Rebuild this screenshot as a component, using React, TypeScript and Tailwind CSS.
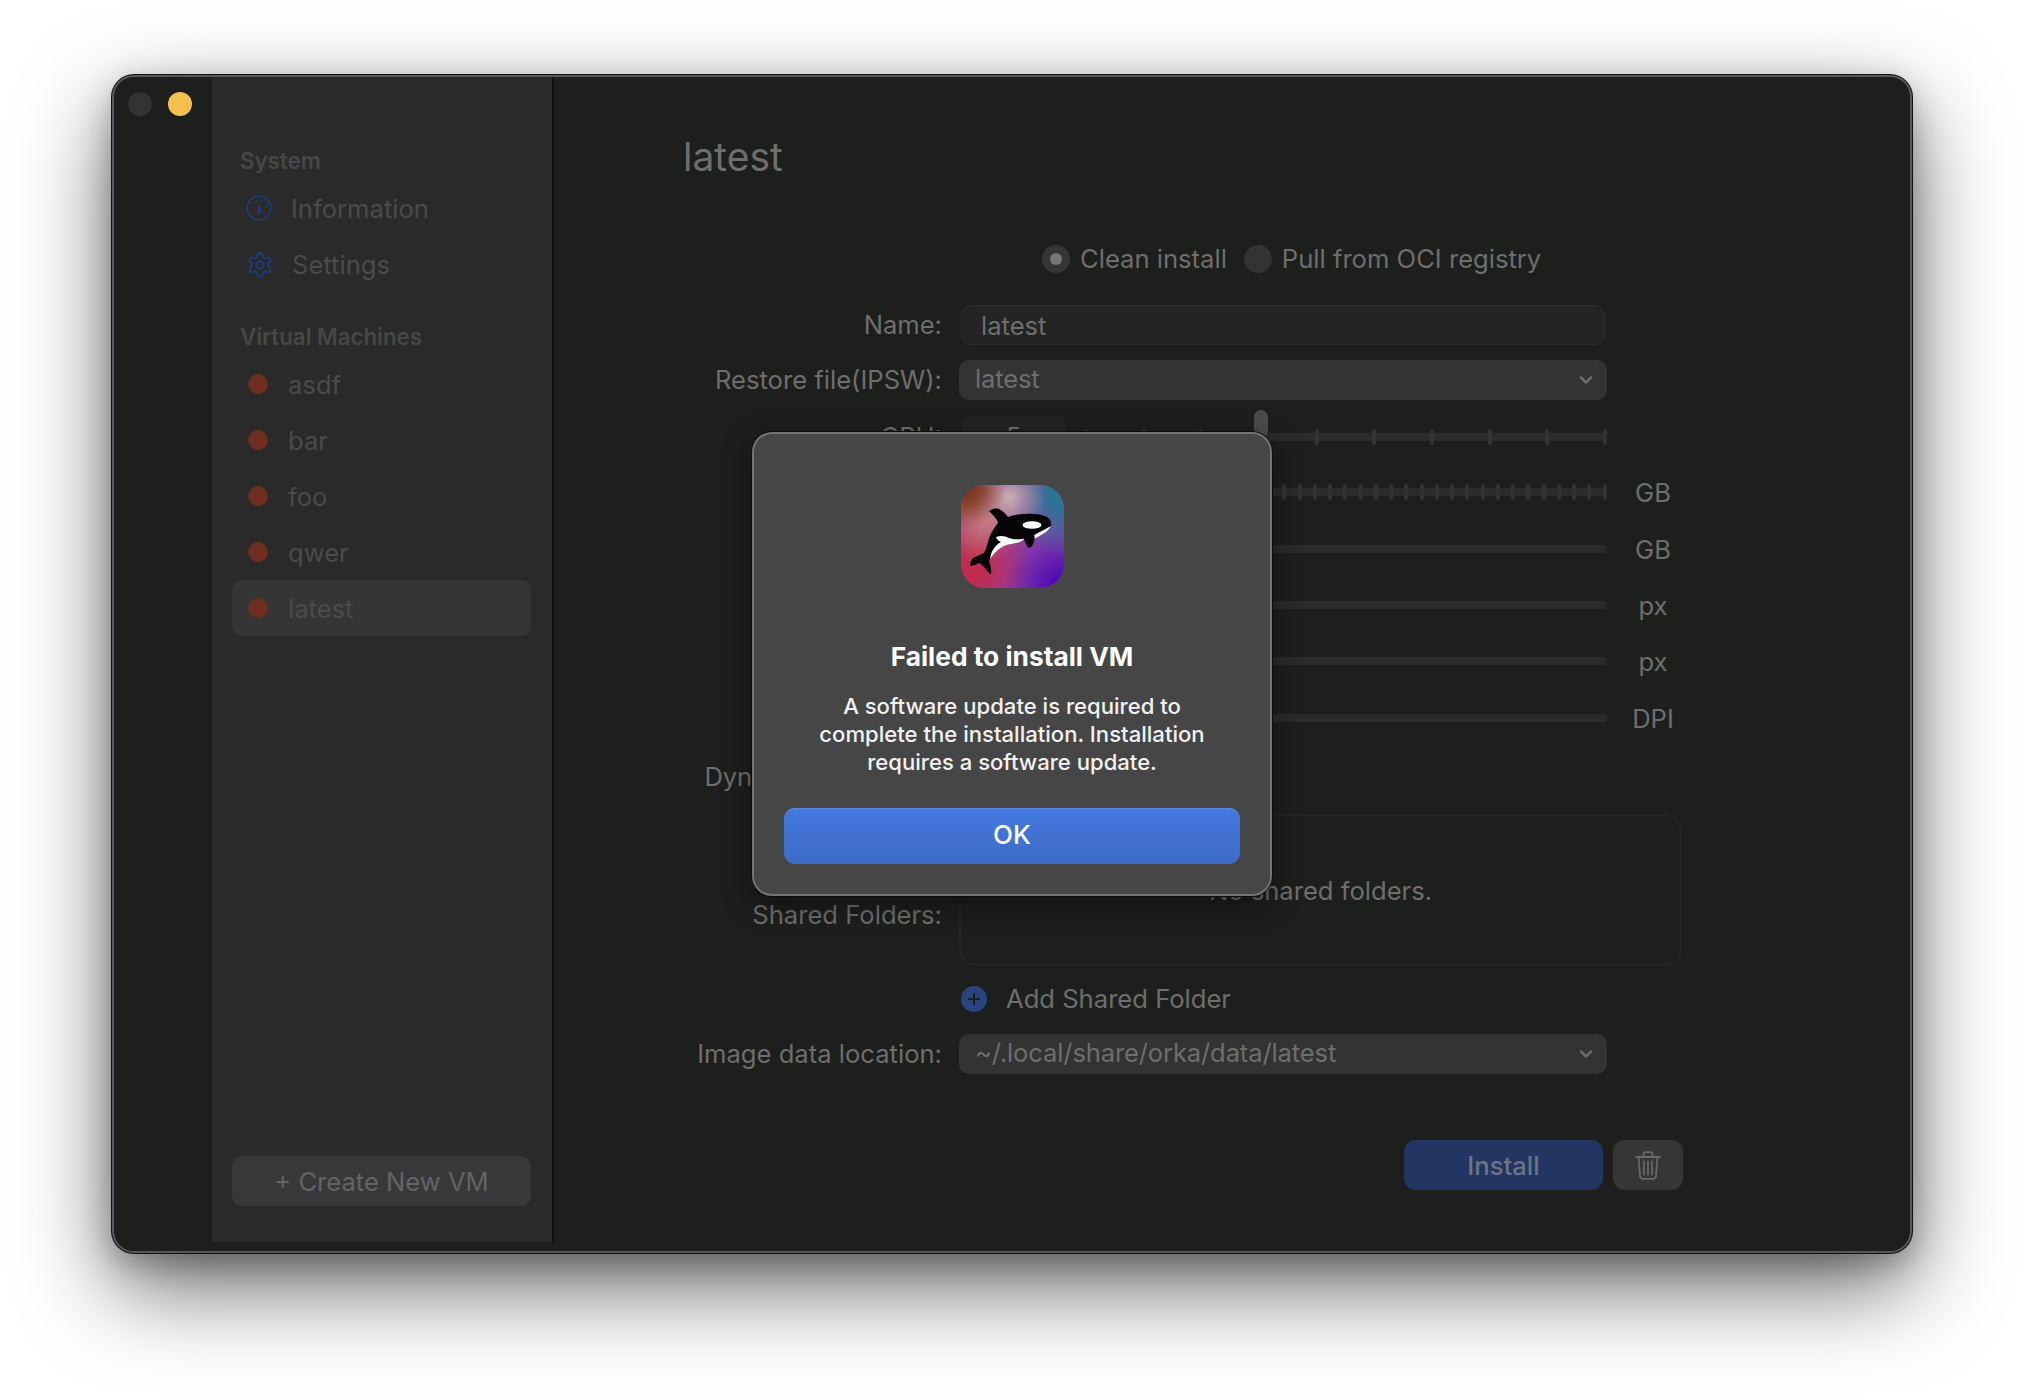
import React from "react";
import { ChevronDown, Settings } from "lucide-react";

const machines = ["asdf", "bar", "foo", "qwer", "latest"];

const GaugeIcon = () => (
  <svg width="26" height="26" viewBox="0 0 26 26" fill="none" stroke="#1f3b7c" strokeWidth="1.6">
    <circle cx="13" cy="13" r="11.8" />
    <g fill="#1f3b7c" stroke="none">
      <circle cx="5.5" cy="12" r="0.9" />
      <circle cx="7.5" cy="7.8" r="0.9" />
      <circle cx="11" cy="5.6" r="0.9" />
      <circle cx="15" cy="5.6" r="0.9" />
      <circle cx="18.5" cy="7.8" r="0.9" />
      <circle cx="20.5" cy="12" r="0.9" />
      <path d="M12.3 10 L13.7 10 L15 17.5 A2 2 0 1 1 11 17.5 Z" />
    </g>
  </svg>
);

const TrashIcon = () => (
  <svg width="26" height="29" viewBox="0 0 26 29" fill="none" stroke="#696969" strokeWidth="1.8" strokeLinecap="round" strokeLinejoin="round">
    <path d="M1 6 H25" />
    <path d="M8.5 6 V3.6 A2.4 2.4 0 0 1 10.9 1.2 H15.1 A2.4 2.4 0 0 1 17.5 3.6 V6" />
    <path d="M3.5 6 L5 25 A2.8 2.8 0 0 0 7.8 27.8 H18.2 A2.8 2.8 0 0 0 21 25 L22.5 6" />
    <path d="M9 10.5 V23.5 M13 10.5 V23.5 M17 10.5 V23.5" />
  </svg>
);

// mesh-like app icon, stacked radial fills with the whale on top
const OrcaLogo = () => (
  <svg width="103" height="103" viewBox="0 0 103 103">
    <defs>
      <radialGradient id="brown" cx="0.02" cy="0.02" r="0.42">
        <stop offset="0" stopColor="#6e2a0a" />
        <stop offset="0.5" stopColor="#8a4426" stopOpacity="0.85" />
        <stop offset="1" stopColor="#a86050" stopOpacity="0" />
      </radialGradient>
      <radialGradient id="salmon" cx="0.22" cy="0.36" r="0.4">
        <stop offset="0" stopColor="#c87c7e" />
        <stop offset="1" stopColor="#c87c7e" stopOpacity="0" />
      </radialGradient>
      <radialGradient id="teal" cx="1" cy="0.08" r="0.62">
        <stop offset="0.2" stopColor="#2a7596" />
        <stop offset="1" stopColor="#2a7596" stopOpacity="0" />
      </radialGradient>
      <radialGradient id="light" cx="0.47" cy="0.12" r="0.36">
        <stop offset="0" stopColor="#c9b2b0" />
        <stop offset="1" stopColor="#c9a0a0" stopOpacity="0" />
      </radialGradient>
      <radialGradient id="rose" cx="0.08" cy="0.78" r="0.62">
        <stop offset="0.25" stopColor="#c02c50" />
        <stop offset="1" stopColor="#c02c50" stopOpacity="0" />
      </radialGradient>
      <radialGradient id="violet" cx="1" cy="1" r="0.58">
        <stop offset="0.15" stopColor="#4c08b4" />
        <stop offset="1" stopColor="#4c08b4" stopOpacity="0" />
      </radialGradient>
      <clipPath id="squircle">
        <rect width="103" height="103" rx="24" />
      </clipPath>
    </defs>
    <g clipPath="url(#squircle)">
      <rect width="103" height="103" fill="#8d40a8" />
      <rect width="103" height="103" fill="url(#rose)" />
      <rect width="103" height="103" fill="url(#violet)" />
      <rect width="103" height="103" fill="url(#teal)" />
      <rect width="103" height="103" fill="url(#salmon)" />
      <rect width="103" height="103" fill="url(#light)" />
      <rect width="103" height="103" fill="url(#brown)" />
    </g>
    <path
      fill="#040406"
      d="M28 26 C31 24 35 23 38 24 C42 26 45 29 47 32 C52 30 58 29 64 29 C72 28 81 29 86 32 C89 34 91 37 90 41 C87 43 85 43 82 45 C79 47 76 49 73 50 C74 54 73 59 70 62 C68 64 66 62 65 59 C64 57 63 55 63 53 C59 55 56 57 50 58 C44 60 38 62 33 68 C31 71 29 73 28 76 C29 80 31 84 30 89 C27 88 25 84 23 82 C21 80 19 78 18 78 C15 79 12 81 9 81 C9 78 10 75 12 73 C15 71 20 70 23 68 C26 62 27 57 28 53 C30 48 33 43 37 38 C36 34 33 31 28 26 Z"
    />
    <ellipse cx="71" cy="40" rx="9.5" ry="3.8" fill="#fff" />
    <path fill="#fff" d="M35 52 C40 50 44 51 48 53 C53 55 58 54 63 54 C61 57 56 58 50 59 C42 60 35 65 29 74 C30 67 33 61 40 57 C38 56 36 55 35 52 Z" />
    <path fill="#fff" d="M90 41 C86 44 80 46 73.5 50 L73.8 53.5 C80 50 87 47 90 41 Z" />
  </svg>
);

const Label = ({ children }: { children?: React.ReactNode }) => (
  <span className="w-[259px] shrink-0 text-right whitespace-nowrap">{children}</span>
);

const Slider = ({ ticks, thumb, unit }: { ticks?: number; thumb?: boolean; unit?: string }) => (
  <div className="flex items-center">
    <div className="relative flex h-4 w-[523px] items-center justify-between">
      <div className="absolute inset-x-0 top-1 h-2 rounded-full bg-[#2a2b2a]" />
      {Array.from({ length: ticks ?? 0 }).map((_, i) => (
        <div key={i} className="relative h-4 w-1 rounded-full bg-[#323332]" />
      ))}
      {thumb ? <div className="absolute left-[170px] top-[-19px] h-[28px] w-[14px] rounded-full bg-[#4b4b4b]" /> : null}
    </div>
    {unit ? <span className="w-[92px] translate-y-px text-center">{unit}</span> : null}
  </div>
);

const SelectBox = ({ value }: { value: string }) => (
  <div className="flex h-10 w-[648px] items-center justify-between rounded-[10px] bg-[#333333] pl-4 pr-[11px]">
    <span className="-translate-y-px tracking-[-0.15px]">{value}</span>
    <ChevronDown size={20} strokeWidth={3} className="text-[#6b6b6b]" />
  </div>
);

export default function App() {
  return (
    <div className="h-[1400px] w-[2024px] overflow-hidden bg-white pl-[112px] pt-[75px] [font-family:Inter,'Liberation_Sans',sans-serif]">
      <div className="relative flex h-[1178px] w-[1800px] overflow-hidden rounded-[22px] border-2 border-[#58585c] bg-[#1d1f1c] text-[25.6px] leading-8 text-[#6e6e6e] shadow-[0_0_0_1px_#111111,0_34px_90px_rgba(0,0,0,0.6),0_10px_30px_rgba(0,0,0,0.25)]">
        <div className="flex w-[98px] shrink-0 gap-4 pl-[14px] pt-[15px]">
          <div className="h-6 w-6 rounded-full bg-[#333333]" />
          <div className="h-6 w-6 rounded-full bg-[#f4c04e]" />
        </div>

        <aside className="flex h-[1165px] w-[342px] shrink-0 flex-col border-r-2 border-[#0f0f0f] bg-[#2a2a2a] pb-9 pl-5 pr-[21px] pt-[70px] text-[#4b4b4b]">
          <p className="pl-[8px] text-[22.3px] font-semibold leading-7 text-[#474747]">System</p>
          <div className="mt-[5px] flex h-14 items-center gap-[19px] pl-[14px]">
            <GaugeIcon />
            <span className="translate-y-px">Information</span>
          </div>
          <div className="flex h-14 items-center gap-[18px] pl-[14px]">
            <Settings size={28} strokeWidth={1.7} className="translate-y-px text-[#1f3b7c]" />
            <span className="translate-y-px">Settings</span>
          </div>

          <p className="mt-[31px] pl-[8px] text-[22.3px] font-semibold leading-7 text-[#474747]">Virtual Machines</p>
          <div className="mt-[5px]">
            {machines.map((vm) => (
              <div key={vm} className={`flex h-14 items-center gap-[20px] rounded-[10px] pl-4 ${vm === "latest" ? "bg-[#353535]" : ""}`}>
                <div className="h-5 w-5 rounded-full bg-[#6e2c22]" />
                <span className="translate-y-px">{vm}</span>
              </div>
            ))}
          </div>

          <button className="mt-auto h-[50px] rounded-[10px] bg-[#37383a] text-[#646464]">
            <span className="inline-block translate-y-px">+ Create New VM</span>
          </button>
        </aside>

        <main className="flex flex-col pl-[129px] pt-[56px]">
          <h1 className="text-[39px] leading-[48px] text-[#6e6e6e]">latest</h1>

          <div className="mt-[64px] flex h-7 items-center pl-[359px]">
            <div className="flex h-7 w-7 items-center justify-center rounded-full bg-[#353535]">
              <div className="h-3 w-3 rounded-full bg-[#767676]" />
            </div>
            <span className="ml-[10px]">Clean install</span>
            <div className="ml-[17px] h-7 w-7 rounded-full bg-[#333333]" />
            <span className="ml-[10px]">Pull from OCI registry</span>
          </div>

          <div className="mt-[32px] flex h-10 items-center gap-[17px]">
            <Label>Name:</Label>
            <div className="ml-[2px] flex h-10 w-[644px] items-center rounded-[10px] border border-[#2d2e2d] bg-[#242424] pl-[19px]">
              <span className="translate-y-px">latest</span>
            </div>
          </div>

          <div className="mt-[15px] flex h-10 items-center gap-[17px]">
            <Label>Restore file(IPSW):</Label>
            <SelectBox value="latest" />
          </div>

          <div className="mt-[17px] flex h-10 items-center gap-[17px]">
            <Label>CPU:</Label>
            <div className="ml-[2px] mr-px flex h-10 w-[105px] items-center justify-center rounded-[6px] bg-[#242424]">5</div>
            <Slider ticks={10} thumb />
          </div>

          <div className="mt-[15px] flex h-10 items-center gap-[17px]">
            <Label />
            <div className="ml-[125px]">
              <Slider ticks={35} unit="GB" />
            </div>
          </div>
          {[
            { unit: "GB", mt: "mt-[17px]" },
            { unit: "px", mt: "mt-[16px]" },
            { unit: "px", mt: "mt-[16px]" },
            { unit: "DPI", mt: "mt-[17px]" },
          ].map((row, i) => (
            <div key={i} className={`${row.mt} flex h-10 items-center gap-[17px]`}>
              <Label />
              <div className="ml-[125px]">
                <Slider unit={row.unit} />
              </div>
            </div>
          ))}

          <div className="mt-[19px] flex h-10 items-center gap-[17px] tracking-[-0.1px]">
            <Label>Dynamic resolution:</Label>
          </div>

          <div className="mt-[17px] flex gap-[17px]">
            <div className="flex shrink-0 pt-[85px]">
              <Label>Shared Folders:</Label>
            </div>
            <div className="flex h-[152px] w-[723px] items-center justify-center rounded-[18px] border-2 border-[#242523]">
              <span className="translate-y-px">No shared folders.</span>
            </div>
          </div>

          <div className="mt-[12px] flex h-10 items-center gap-[17px]">
            <Label />
            <div className="ml-[2px] flex translate-y-px items-center gap-[19px]">
              <div className="flex h-[26px] w-[26px] items-center justify-center rounded-full bg-[#2a4480] text-[#1c1d1b]">
                <svg width="14" height="14" viewBox="0 0 14 14" stroke="currentColor" strokeWidth="2">
                  <path d="M7 1 V13 M1 7 H13" />
                </svg>
              </div>
              <span>Add Shared Folder</span>
            </div>
          </div>

          <div className="mt-[16px] flex h-10 items-center gap-[17px]">
            <Label>Image data location:</Label>
            <SelectBox value="~/.local/share/orka/data/latest" />
          </div>

          <div className="ml-[277px] mt-[66px] flex w-[723px] justify-end gap-[10px]">
            <button className="h-[50px] w-[199px] rounded-[12px] bg-[#233562] font-medium text-[#6c7484]">
              <span className="inline-block translate-y-px">Install</span>
            </button>
            <button className="flex h-[50px] w-[70px] items-center justify-center rounded-[12px] bg-[#363636]">
              <TrashIcon />
            </button>
          </div>
        </main>

        <div className="absolute left-[638px] top-[355px] flex h-[464px] w-[520px] flex-col items-center rounded-[20px] border-2 border-[#737373] bg-[#464646] pt-[51px] shadow-[0_0_0_1px_#0c0c0c,0_8px_30px_rgba(0,0,0,0.45)]">
          <OrcaLogo />
          <h2 className="mt-[52px] translate-y-px text-[26.3px] font-bold leading-8 text-white">Failed to install VM</h2>
          <p className="mt-[20px] text-center text-[22.1px] font-medium leading-[28px] text-[#f2f2f2]">
            A software update is required to
            <br />
            complete the installation. Installation
            <br />
            requires a software update.
          </p>
          <button className="mt-[32px] h-14 w-[456px] rounded-[11px] border-t border-[#5a8ae6] bg-gradient-to-b from-[#4579de] to-[#3d6bc6] text-[26px] font-medium text-white">
            <span className="inline-block -translate-y-[2px]">OK</span>
          </button>
        </div>
      </div>
    </div>
  );
}
